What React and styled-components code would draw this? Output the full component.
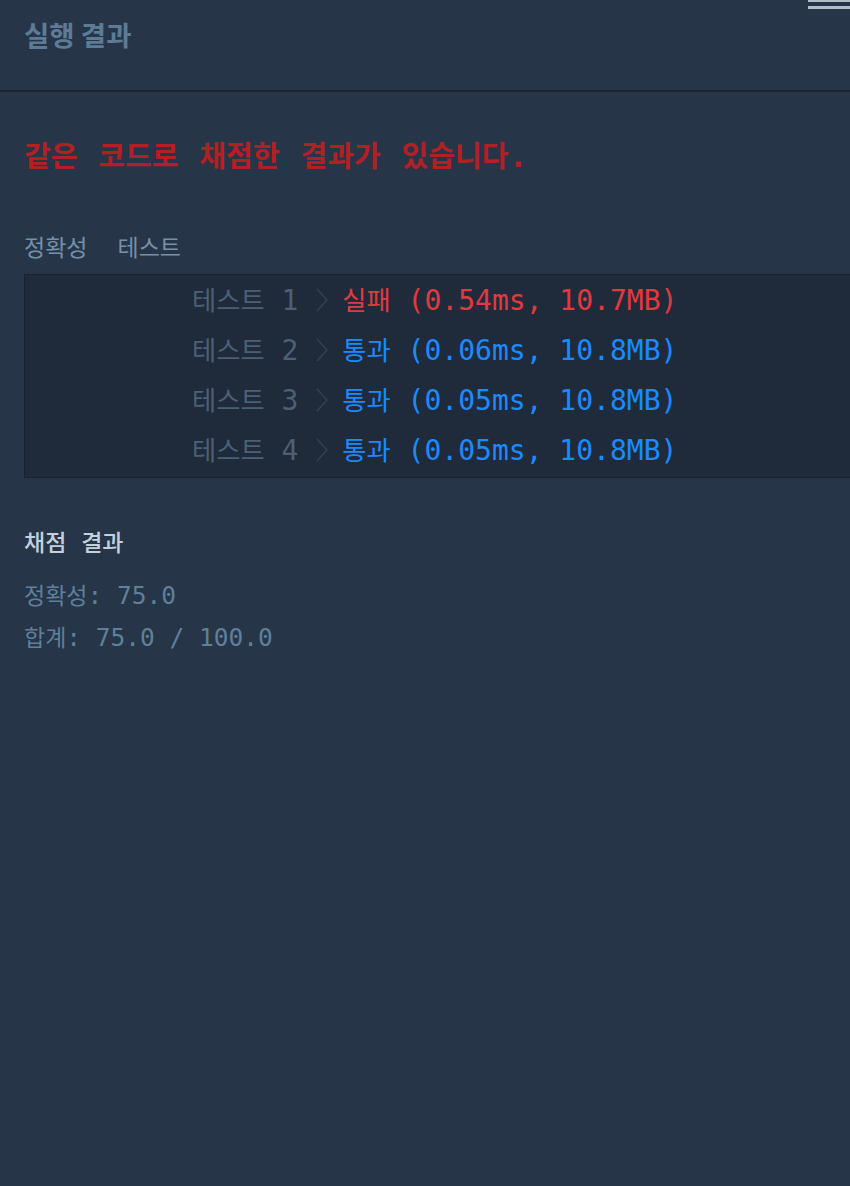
import styled, { createGlobalStyle } from "styled-components"

const GlobalStyle = createGlobalStyle`
  html, body {
    margin: 0;
    background: #263648;
    overflow: hidden;
  }
  * { box-sizing: border-box; }
`

const MONO = `"DejaVu Sans Mono", "Liberation Mono", "Noto Sans CJK KR", monospace`
const SANS = `"Noto Sans CJK KR", "Noto Sans", sans-serif`

const Page = styled.div`
  position: relative;
  min-height: 1186px;
  width: 850px;
  overflow: hidden;
  background: #263648;
`

const MenuButton = styled.div`
  position: absolute;
  top: 0;
  right: 0;
  width: 42px;
  display: flex;
  flex-direction: column;
  gap: 4px;

  span {
    display: block;
    height: 3px;
    background: #b3bfc8;
  }
  span:first-child {
    height: 2px;
  }
`

const Header = styled.header`
  height: 92px;
  padding: 17px 24px 0;
  border-bottom: 2px solid #1a2331;
`

const Title = styled.h1`
  margin: 0;
  font-family: ${SANS};
  font-size: 27.5px;
  font-weight: 700;
  line-height: 34px;
  color: #5d7b96;
`

const Body = styled.main`
  padding: 0 24px;
`

const Notice = styled.div`
  margin-top: 44px;
  height: 40px;
  font-family: ${MONO};
  font-size: 31px;
  line-height: 40px;
  font-weight: 700;
  word-spacing: 2px;
  color: #b21f25;
  white-space: pre;
`

const Tabs = styled.div`
  margin-top: 55px;
  height: 30px;
  display: flex;
  gap: 30px;
  font-family: ${SANS};
  font-size: 23px;
  line-height: 30px;
  color: #7690a8;
`

const ResultBox = styled.div`
  margin-top: 13px;
  width: 900px;
  padding: 1px 0;
  background: #1f2a3b;
  border: 1px solid #18212d;
`

const Row = styled.div`
  height: 50px;
  line-height: 50px;
  padding-left: 167px;
  font-family: ${MONO};
  font-size: 28px;
  white-space: pre;
`

const CaseLabel = styled.span`
  color: #4b6075;
`

const Chevron = styled.svg`
  width: 12px;
  height: 24px;
  margin: 0 14px 0 18px;
  vertical-align: middle;
  position: relative;
  top: -2px;
`

const Outcome = styled.span`
  color: ${({ $pass }) => ($pass ? "#1a8bff" : "#e2393f")};
`

const Ko = styled.span`
  font-family: ${SANS};
  font-size: 0.94em;
  line-height: 0;
`

const Score = styled.section`
  margin-top: 45px;
  font-family: ${MONO};
  font-size: 24.5px;
  white-space: pre;
`

const ScoreTitle = styled.div`
  height: 40px;
  line-height: 40px;
  color: #c4d0db;
  font-weight: 500;
`

const ScoreLine = styled.div`
  height: 40px;
  line-height: 40px;
  color: #5f7f9a;
  margin-top: ${({ $first }) => ($first ? "13px" : "2px")};
`

// wrap hangul runs so they get the narrower korean sizing like the mac fallback
function Mixed({ text }) {
  return text.split(/([가-힣]+)/).map((part, i) =>
    /[가-힣]/.test(part) ? <Ko key={i}>{part}</Ko> : part
  )
}

const tests = [
  { id: 1, pass: false, result: "실패 (0.54ms, 10.7MB)" },
  { id: 2, pass: true, result: "통과 (0.06ms, 10.8MB)" },
  { id: 3, pass: true, result: "통과 (0.05ms, 10.8MB)" },
  { id: 4, pass: true, result: "통과 (0.05ms, 10.8MB)" },
]

export default function App() {
  return (
    <Page>
      <GlobalStyle />
      <MenuButton>
        <span />
        <span />
      </MenuButton>
      <Header>
        <Title>실행 결과</Title>
      </Header>
      <Body>
        <Notice>
          <Mixed text="같은 코드로 채점한 결과가 있습니다." />
        </Notice>

        <Tabs>
          <span>정확성</span>
          <span>테스트</span>
        </Tabs>

        <ResultBox>
          {tests.map((t) => (
            <Row key={t.id}>
              <CaseLabel>
                <Mixed text={`테스트 ${t.id}`} />
              </CaseLabel>
              <Chevron viewBox="0 0 12 24" fill="none">
                <polyline points="1,1 11,12 1,23" stroke="#334254" strokeWidth="1.4" />
              </Chevron>
              <Outcome $pass={t.pass}>
                <Mixed text={t.result} />
              </Outcome>
            </Row>
          ))}
        </ResultBox>

        <Score>
          <ScoreTitle>
            <Mixed text="채점 결과" />
          </ScoreTitle>
          <ScoreLine $first>
            <Mixed text="정확성: 75.0" />
          </ScoreLine>
          <ScoreLine>
            <Mixed text="합계: 75.0 / 100.0" />
          </ScoreLine>
        </Score>
      </Body>
    </Page>
  )
}
